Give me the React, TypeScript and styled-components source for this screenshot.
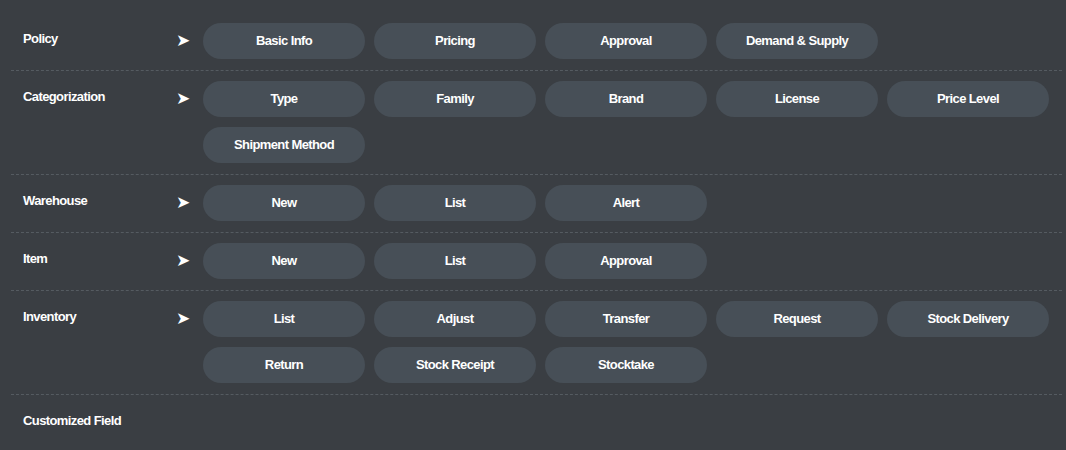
import React from 'react';
import styled, { createGlobalStyle } from 'styled-components';

const GlobalStyle = createGlobalStyle`
  html, body {
    margin: 0;
    padding: 0;
    background-color: #3a3e43;
  }

  body {
    font-family: 'Liberation Sans', Arial, sans-serif;
    color: #ffffff;
  }
`;

const MenuPanel = styled.div`
  width: 1066px;
  height: 450px;
  box-sizing: border-box;
  padding: 13px 4px 0 11px;
  background-color: #3a3e43;
`;

const MenuRow = styled.div<{ last?: boolean }>`
  display: flex;
  align-items: flex-start;
  padding: 10px 0 11px 12px;
  border-bottom: ${({ last }) => (last ? 'none' : '1px dashed #555b61')};
`;

const RowLabel = styled.div`
  width: 153px;
  flex-shrink: 0;
  padding-top: 8px;
  font-size: 13px;
  line-height: 16px;
  font-weight: 700;
  letter-spacing: -0.6px;
  color: #ffffff;
`;

const Arrow = styled.div`
  width: 27px;
  flex-shrink: 0;
  height: 35px;
  line-height: 35px;
  font-family: 'DejaVu Sans', sans-serif;
  font-size: 17px;
  color: #ffffff;
`;

const ButtonGrid = styled.div`
  display: grid;
  grid-template-columns: repeat(5, 162px);
  column-gap: 9px;
  row-gap: 10px;
`;

const MenuButton = styled.button`
  width: 162px;
  height: 36px;
  border: none;
  border-radius: 18px;
  background-color: #474f57;
  color: #ffffff;
  font-family: 'Liberation Sans', Arial, sans-serif;
  font-size: 13px;
  font-weight: 700;
  letter-spacing: -0.6px;
  padding: 0 0 2px;
  cursor: pointer;
`;

type Section = {
  label: string;
  items: string[];
};

const sections: Section[] = [
  { label: 'Policy', items: ['Basic Info', 'Pricing', 'Approval', 'Demand & Supply'] },
  {
    label: 'Categorization',
    items: ['Type', 'Family', 'Brand', 'License', 'Price Level', 'Shipment Method'],
  },
  { label: 'Warehouse', items: ['New', 'List', 'Alert'] },
  { label: 'Item', items: ['New', 'List', 'Approval'] },
  {
    label: 'Inventory',
    items: [
      'List',
      'Adjust',
      'Transfer',
      'Request',
      'Stock Delivery',
      'Return',
      'Stock Receipt',
      'Stocktake',
    ],
  },
  { label: 'Customized Field', items: [] },
];

const App: React.FC = () => {
  return (
    <>
      <GlobalStyle />
      <MenuPanel>
        {sections.map((section, i) => (
          <MenuRow key={section.label} last={i === sections.length - 1}>
            <RowLabel>{section.label}</RowLabel>
            {section.items.length > 0 && (
              <>
                <Arrow>➤</Arrow>
                <ButtonGrid>
                  {section.items.map((item) => (
                    <MenuButton key={item}>{item}</MenuButton>
                  ))}
                </ButtonGrid>
              </>
            )}
          </MenuRow>
        ))}
      </MenuPanel>
    </>
  );
};

export default App;
